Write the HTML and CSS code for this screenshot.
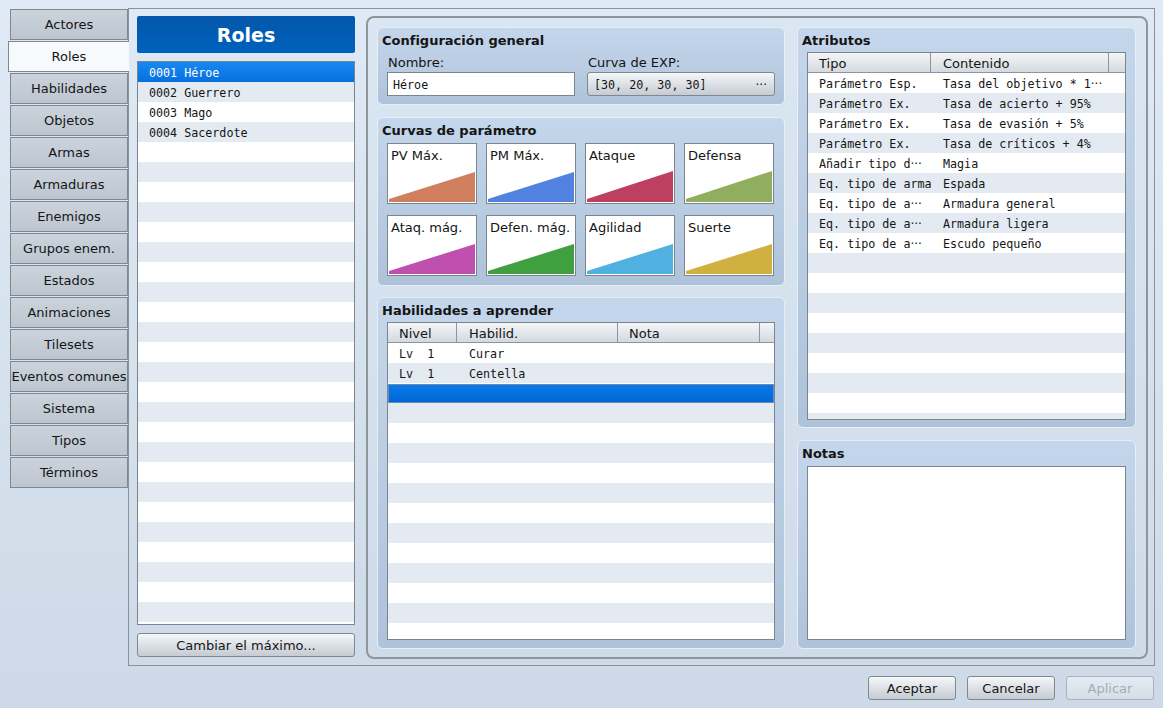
FILE: index.html
```html
<!DOCTYPE html>
<html lang="es">
<head>
<meta charset="utf-8">
<title>Base de datos - Roles</title>
<link rel="stylesheet" href="styles.css">
</head>
<body>
<div class="app">
  <div class="main">
    <nav class="tabs">
      <div class="tab">Actores</div>
      <div class="tab active">Roles</div>
      <div class="tab">Habilidades</div>
      <div class="tab">Objetos</div>
      <div class="tab">Armas</div>
      <div class="tab">Armaduras</div>
      <div class="tab">Enemigos</div>
      <div class="tab">Grupos enem.</div>
      <div class="tab">Estados</div>
      <div class="tab">Animaciones</div>
      <div class="tab">Tilesets</div>
      <div class="tab">Eventos comunes</div>
      <div class="tab">Sistema</div>
      <div class="tab">Tipos</div>
      <div class="tab">Términos</div>
    </nav>
    <div class="panel">
      <div class="rolecol">
        <div class="roles-head">Roles</div>
        <div class="list">
          <div class="row sel">0001 Héroe</div>
          <div class="row">0002 Guerrero</div>
          <div class="row">0003 Mago</div>
          <div class="row">0004 Sacerdote</div>
        </div>
        <button class="btn wide">Cambiar el máximo...</button>
      </div>
      <div class="frame">
        <div class="col leftcol">
          <section class="group cfg">
            <div class="gtitle">Configuración general</div>
            <div class="fields">
              <div class="field">
                <div class="flabel">Nombre:</div>
                <div class="input">Héroe</div>
              </div>
              <div class="field">
                <div class="flabel">Curva de EXP:</div>
                <button class="btn pick"><span class="mono">[30, 20, 30, 30]</span><span class="dots">···</span></button>
              </div>
            </div>
          </section>
          <section class="group curves">
            <div class="gtitle">Curvas de parámetro</div>
            <div class="cgrid">
              <div class="cbox"><span class="clabel">PV Máx.</span><svg class="tri" viewBox="0 0 88 32" width="88" height="32"><polygon points="1,31 87,31 87,1 1,28" fill="#d07f5f"/></svg></div>
              <div class="cbox"><span class="clabel">PM Máx.</span><svg class="tri" viewBox="0 0 88 32" width="88" height="32"><polygon points="1,31 87,31 87,1 1,28" fill="#5282e0"/></svg></div>
              <div class="cbox"><span class="clabel">Ataque</span><svg class="tri" viewBox="0 0 88 32" width="88" height="32"><polygon points="1,31 87,31 87,0 1,28" fill="#be4060"/></svg></div>
              <div class="cbox"><span class="clabel">Defensa</span><svg class="tri" viewBox="0 0 88 32" width="88" height="32"><polygon points="1,31 87,31 87,0 1,28" fill="#90ae60"/></svg></div>
              <div class="cbox"><span class="clabel">Ataq. mág.</span><svg class="tri" viewBox="0 0 88 32" width="88" height="32"><polygon points="1,31 87,31 87,1 1,28" fill="#c050b0"/></svg></div>
              <div class="cbox"><span class="clabel">Defen. mág.</span><svg class="tri" viewBox="0 0 88 32" width="88" height="32"><polygon points="1,31 87,31 87,1 1,28" fill="#40a040"/></svg></div>
              <div class="cbox"><span class="clabel">Agilidad</span><svg class="tri" viewBox="0 0 88 32" width="88" height="32"><polygon points="1,31 87,31 87,1 1,28" fill="#50b0e0"/></svg></div>
              <div class="cbox"><span class="clabel">Suerte</span><svg class="tri" viewBox="0 0 88 32" width="88" height="32"><polygon points="1,31 87,31 87,1 1,28" fill="#d0b040"/></svg></div>
            </div>
          </section>
          <section class="group learn">
            <div class="gtitle">Habilidades a aprender</div>
            <div class="table">
              <div class="thead">
                <div class="th c-lv">Nivel</div>
                <div class="th c-sk">Habilid.</div>
                <div class="th c-nt">Nota</div>
                <div class="th c-x"></div>
              </div>
              <div class="tbody">
                <div class="tr"><span class="td c-lv">Lv  1</span><span class="td c-sk">Curar</span></div>
                <div class="tr"><span class="td c-lv">Lv  1</span><span class="td c-sk">Centella</span></div>
                <div class="tr selrow"></div>
              </div>
            </div>
          </section>
        </div>
        <div class="col rightcol">
          <section class="group attrs">
            <div class="gtitle">Atributos</div>
            <div class="table">
              <div class="thead">
                <div class="th c-ty">Tipo</div>
                <div class="th c-ct">Contenido</div>
                <div class="th c-x"></div>
              </div>
              <div class="tbody">
                <div class="tr"><span class="td c-ty">Parámetro Esp.</span><span class="td c-ct">Tasa del objetivo * 1<span class="ell">···</span></span></div>
                <div class="tr"><span class="td c-ty">Parámetro Ex.</span><span class="td c-ct">Tasa de acierto + 95%</span></div>
                <div class="tr"><span class="td c-ty">Parámetro Ex.</span><span class="td c-ct">Tasa de evasión + 5%</span></div>
                <div class="tr"><span class="td c-ty">Parámetro Ex.</span><span class="td c-ct">Tasa de críticos + 4%</span></div>
                <div class="tr"><span class="td c-ty">Añadir tipo d<span class="ell">···</span></span><span class="td c-ct">Magia</span></div>
                <div class="tr"><span class="td c-ty">Eq. tipo de arma</span><span class="td c-ct">Espada</span></div>
                <div class="tr"><span class="td c-ty">Eq. tipo de a<span class="ell">···</span></span><span class="td c-ct">Armadura general</span></div>
                <div class="tr"><span class="td c-ty">Eq. tipo de a<span class="ell">···</span></span><span class="td c-ct">Armadura ligera</span></div>
                <div class="tr"><span class="td c-ty">Eq. tipo de a<span class="ell">···</span></span><span class="td c-ct">Escudo pequeño</span></div>
              </div>
            </div>
          </section>
          <section class="group notes">
            <div class="gtitle">Notas</div>
            <div class="notebox"></div>
          </section>
        </div>
      </div>
    </div>
  </div>
  <div class="footer">
    <button class="btn fbtn">Aceptar</button>
    <button class="btn fbtn">Cancelar</button>
    <button class="btn fbtn disabled">Aplicar</button>
  </div>
</div>
</body>
</html>
```

FILE: styles.css
```css
* { box-sizing: border-box; }
html, body { margin: 0; padding: 0; }
body {
  width: 1163px;
  height: 708px;
  overflow: hidden;
  background: linear-gradient(#dfeaf6, #cdd9e6);
  font-family: "DejaVu Sans", sans-serif;
  font-size: 13px;
  color: #151515;
}
.app { display: flex; flex-direction: column; height: 708px; }
.main { display: flex; padding-top: 8px; height: 666px; }

/* tabs */
.tabs {
  width: 128px;
  flex: none;
  padding: 1px 0 0 10px;
  display: flex;
  flex-direction: column;
  gap: 1px;
}
.tab {
  height: 31px;
  border: 1px solid #7f878f;
  background: linear-gradient(#cbd3dc, #bdc6d0);
  display: flex;
  align-items: center;
  justify-content: center;
  white-space: nowrap;
}
.tab.active {
  background: #f7fafd;
  border-right: none;
  margin-left: -2px;
  margin-right: -1px;
  position: relative;
  z-index: 1;
}

/* main panel */
.panel {
  flex: 1;
  display: flex;
  border: 1px solid #8a9199;
  margin-right: 8px;
  padding: 7px 0 0 8px;
}
.rolecol {
  width: 218px;
  flex: none;
  display: flex;
  flex-direction: column;
  margin-bottom: 8px;
}
.roles-head {
  height: 37px;
  border-radius: 2px;
  background: linear-gradient(#0457aa, #0062bd);
  color: #fff;
  font-weight: bold;
  font-size: 19px;
  display: flex;
  align-items: center;
  justify-content: center;
  margin-bottom: 8px;
}
.list {
  flex: 1;
  border: 1px solid #7d848b;
  background: repeating-linear-gradient(#ffffff 0 20px, #e3eaf1 20px 40px);
  font-family: "DejaVu Sans Mono", monospace;
  font-size: 11.7px;
}
.row {
  height: 20px;
  line-height: 21px;
  padding: 1px 0 0 11px;
  white-space: pre;
}
.row.sel {
  background: linear-gradient(#1888f0, #0670df);
  color: #fff;
}

/* buttons */
.btn {
  font-family: "DejaVu Sans", sans-serif;
  font-size: 13px;
  color: #151515;
  height: 24px;
  border: 1px solid #80878f;
  border-radius: 3px;
  background: linear-gradient(#f5f7f9, #c5cbd2);
  padding: 0;
}
.btn.wide { margin-top: 8px; width: 218px; padding-top: 1px; }
.btn.disabled {
  color: #a3acb6;
  border-color: #aab2ba;
  background: linear-gradient(#e4ebf3, #d5dee8);
}

/* frame */
.frame {
  width: 782px;
  flex: none;
  margin: 0 0 6px 11px;
  border: 2px solid #8d959d;
  border-radius: 8px;
  background: linear-gradient(#dbe6f3, #cfdbe8);
  padding: 9px 10px 8px 9px;
  display: flex;
  gap: 12px;
}
.col { display: flex; flex-direction: column; }
.leftcol { width: 408px; }
.rightcol { width: 339px; }

.group {
  border: 1px solid #e6eef7;
  border-radius: 6px;
  background: linear-gradient(#c4d6eb, #aec3da);
  display: flex;
  flex-direction: column;
}
.gtitle {
  font-weight: bold;
  line-height: 18px;
  height: 21px;
  padding: 4px 0 0 4px;
  white-space: nowrap;
}

/* config */
.cfg { height: 78px; }
.fields {
  display: grid;
  grid-template-columns: 188px 188px;
  column-gap: 12px;
  padding: 4px 9px 8px 9px;
}
.flabel { line-height: 18px; height: 18px; margin-bottom: 1px; padding: 1px 0 0 1px; }
.input {
  height: 24px;
  border: 1px solid #7d848b;
  background: #fff;
  font-family: "DejaVu Sans Mono", monospace;
  font-size: 11.7px;
  line-height: 22px;
  padding: 1px 0 0 5px;
}
.btn.pick {
  width: 188px;
  display: flex;
  align-items: center;
  justify-content: space-between;
  padding: 1px 7px 0 6px;
}
.mono { font-family: "DejaVu Sans Mono", monospace; font-size: 11.7px; }
.dots { font-size: 12px; }

/* curves */
.curves { height: 169px; margin-top: 12px; }
.cgrid {
  display: grid;
  grid-template-columns: repeat(4, 90px);
  grid-auto-rows: 61px;
  column-gap: 9px;
  row-gap: 11px;
  padding: 4px 0 9px 9px;
}
.cbox {
  border: 1px solid #7d848b;
  background: #fff;
  display: flex;
  flex-direction: column;
}
.clabel { line-height: 18px; padding: 3px 0 0 3px; white-space: nowrap; }
.tri { display: block; margin-top: auto; }

/* tables */
.learn { flex: 1; margin-top: 11px; padding-bottom: 8px; }
.table {
  margin: 3px 9px 0 9px;
  border: 1px solid #7d848b;
  background: #fff;
  display: flex;
  flex-direction: column;
  flex: 1;
  overflow: hidden;
}
.thead {
  display: flex;
  height: 20px;
  border-bottom: 1px solid #8d949b;
  background: linear-gradient(#f4f6f8, #d3d9df);
  flex: none;
}
.th {
  line-height: 19px;
  padding-top: 1px;
  border-right: 1px solid #8d949b;
  padding-left: 11px;
  white-space: nowrap;
  flex: none;
}
.th.c-x { flex: 1; border-right: none; }
.tbody {
  flex: 1;
  background: repeating-linear-gradient(#ffffff 0 20px, #e3eaf1 20px 40px);
  font-family: "DejaVu Sans Mono", monospace;
  font-size: 11.7px;
}
.tr { display: flex; height: 20px; line-height: 21px; }
.td { flex: none; white-space: pre; padding: 1px 0 0 11px; }
.c-lv { width: 69px; }
.c-sk { width: 161px; padding-left: 12px; }
.c-nt { width: 142px; }
.c-ty { width: 123px; }
.c-ct { width: 178px; padding-left: 12px; }
.ell { font-family: "DejaVu Sans", sans-serif; font-size: 12px; }
.selrow {
  margin-top: 1px;
  height: 19px;
  border: 1px solid #6a8cb3;
  background: linear-gradient(#0a79e7, #0067d6);
}

/* right column */
.attrs { height: 401px; padding-bottom: 7px; }
.notes { flex: 1; margin-top: 12px; padding-bottom: 8px; }
.notebox {
  flex: 1;
  margin: 4px 9px 0 9px;
  border: 1px solid #7d848b;
  background: #fff;
}

/* footer */
.footer {
  flex: 1;
  display: flex;
  justify-content: flex-end;
  gap: 11px;
  padding: 10px 9px 0 0;
}
.btn.fbtn { width: 88px; padding-top: 1px; }
```
